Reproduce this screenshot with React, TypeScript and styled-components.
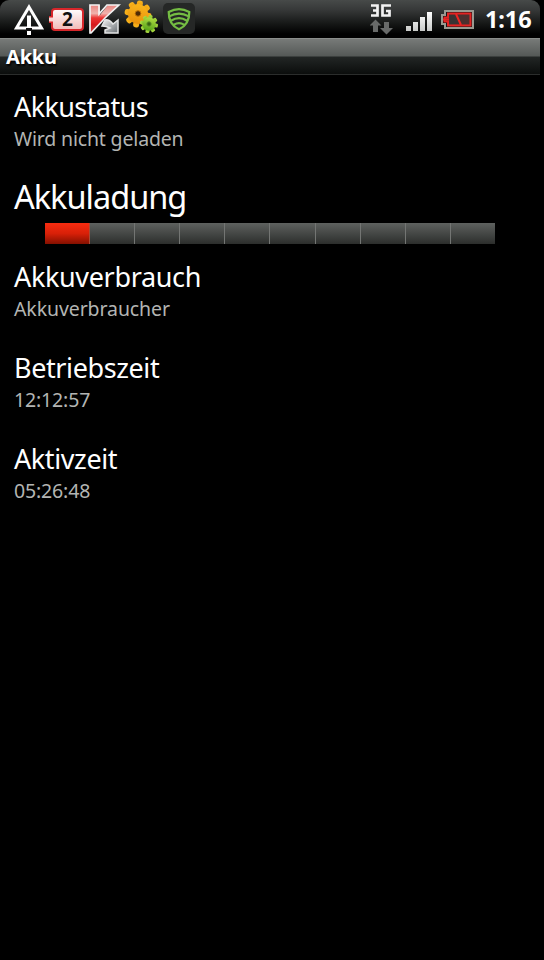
import React from 'react';
import styled, { createGlobalStyle } from 'styled-components';

const GlobalStyle = createGlobalStyle`
  html, body { margin: 0; background: #000; }
  body { overflow: hidden; font-family: "Noto Sans", "Open Sans", sans-serif; }
  svg { display: block; flex: none; }
`;

const Screen = styled.div`
  width: 540px;
  height: 960px;
  background: #000;
  color: #fff;
`;

const StatusBar = styled.header`
  display: flex;
  justify-content: space-between;
  box-sizing: border-box;
  height: 38px;
  padding: 0 8px 0 13px;
  border-radius: 9px 9px 0 0;
  background: linear-gradient(#474a49 0, #363838 10px, #171918 23px, #000 34px);
`;

const IconGroup = styled.div<{ $gap: number }>`
  display: flex;
  gap: ${(p) => p.$gap}px;
`;

const Clock = styled.span`
  width: 47px;
  margin-left: 3px;
  font-size: 23.5px;
  line-height: 39px;
  font-weight: 700;
  letter-spacing: -0.1px;
  white-space: nowrap;
`;

const TitleBar = styled.h1`
  box-sizing: border-box;
  height: 37px;
  margin: 0;
  padding-left: 6px;
  border-top: 1px solid #8a8d8b;
  border-bottom: 1px solid #2b2d2c;
  background: linear-gradient(#777a78 0, #555957 17px, #222625 18px, #0b0d0c 35px);
  font-size: 20px;
  line-height: 36px;
  font-weight: 700;
  letter-spacing: -0.2px;
  text-shadow: 1px 2px 2px #000;
`;

const Content = styled.main`
  padding: 14px 14px 0;
`;

const Row = styled.section`
  height: 91px;
`;

const ChargeRow = styled.section`
  height: 84px;
  margin-top: -5px;
`;

const Label = styled.h2<{ $size?: number; $spacing: number }>`
  margin: 0;
  font-size: ${(p) => p.$size ?? 27}px;
  line-height: ${(p) => (p.$size ? 44 : 36)}px;
  font-weight: 400;
  letter-spacing: ${(p) => p.$spacing}px;
  white-space: nowrap;
`;

const Detail = styled.p<{ $spacing: number }>`
  margin: 1px 0 0;
  color: #b3b5b3;
  font-size: 19.5px;
  line-height: 26px;
  letter-spacing: ${(p) => p.$spacing}px;
  white-space: nowrap;
`;

const Meter = styled.div`
  display: flex;
  width: 450px;
  height: 21px;
  margin: 4px 0 0 31px;
`;

const Segment = styled.div<{ $on: boolean }>`
  flex: 1;
  box-sizing: border-box;
  border-right: 1px solid ${(p) => (p.$on ? '#a94b36' : '#737573')};
  background: ${(p) => (p.$on ? 'linear-gradient(#f72c10, #d82008 50%, #841000)' : 'linear-gradient(#5e615f, #2c2e2c)')};
  &:last-child { border-right: 0; }
`;

const WarningIcon = () => (
  <svg width="33" height="38" viewBox="0 0 33 38">
    <path d="M16 7 L28.5 28 H3.5 Z" fill="none" stroke="#fff" strokeWidth="3" />
    <path d="M14 15.5h4v12h-4z" fill="#fff" />
    <path d="M13 28h6v3h-6z" fill="#111" />
    <path d="M14 31h4v4h-4z" fill="#fff" />
  </svg>
);

const BatteryCount = () => (
  <svg width="38" height="38" viewBox="0 0 38 38">
    <defs>
      <linearGradient id="pill" x2="0" y2="1"><stop stopColor="#fff" /><stop offset="1" stopColor="#f2b7b4" /></linearGradient>
    </defs>
    <path d="M7 9h25q3 0 3 3v15q0 3-3 3H7q-3 0-3-3v-5H2v-5h2v-5q0-3 3-3Z" fill="url(#pill)" stroke="#d7272b" strokeWidth="2" />
    <path d="M1 17.5h4v4H1z" fill="#f8d5d3" />
    <text x="19.5" y="26.2" textAnchor="middle" fontFamily="Noto Sans" fontWeight="700" fontSize="19" fill="#111">2</text>
  </svg>
);

const KasperskyIcon = () => (
  <svg width="33" height="38" viewBox="0 0 33 38">
    <defs>
      <linearGradient id="kred" x2="0" y2="1"><stop stopColor="#e98580" /><stop offset=".3" stopColor="#f0b3ad" /><stop offset=".46" stopColor="#ed3634" /><stop offset=".7" stopColor="#d6191d" /><stop offset="1" stopColor="#c94c49" /></linearGradient>
      <linearGradient id="kgrey" x2="1" y2="1"><stop stopColor="#f1f1f1" /><stop offset="1" stopColor="#686e72" /></linearGradient>
    </defs>
    <path d="M2 5h10v10l8-10h11L17 18 3 33H2Z" fill="url(#kred)" />
    <path d="M2 5h9v9l8-9h12L17 18 3 33H2Z" fill="none" stroke="#f3f3f3" strokeWidth="1.7" />
    <path d="M17 20q4-1 8 4l5-4v13H17v-3l5-2q-4-2-8-2Z" fill="url(#kgrey)" stroke="#e4e5e5" strokeWidth="1.5" />
  </svg>
);

const teeth = [0, 45, 90, 135, 180, 225, 270, 315];

const GearsIcon = () => (
  <svg width="37" height="38" viewBox="0 0 37 38">
    <defs>
      <linearGradient id="gold" x2="0" y2="1"><stop stopColor="#f9b51c" /><stop offset="1" stopColor="#e88f0b" /></linearGradient>
      <linearGradient id="lime" x2="0" y2="1"><stop stopColor="#b0dc42" /><stop offset="1" stopColor="#56a318" /></linearGradient>
    </defs>
    <g fill="url(#gold)" transform="translate(15 14) rotate(10)">
      {teeth.map((a) => <rect key={a} x="-3" y="-13.5" width="6" height="9" rx="2.3" transform={`rotate(${a})`} />)}
      <circle r="10" />
    </g>
    <circle cx="15" cy="13.5" r="2.8" fill="#4e2b06" stroke="#bd7106" />
    <g fill="url(#lime)" transform="translate(26 24) rotate(12)">
      {teeth.map((a) => <rect key={a} x="-2" y="-9" width="4" height="7" rx="1.2" transform={`rotate(${a})`} />)}
      <circle r="6.7" />
    </g>
    <circle cx="26" cy="24" r="2.2" fill="#386210" stroke="#609629" />
  </svg>
);

const ShieldIcon = () => (
  <svg width="34" height="38" viewBox="0 0 34 38">
    <rect x="1" y="3" width="32" height="31" rx="5" fill="#252726" />
    <g fill="none" stroke="#74bd43" strokeWidth="2.2" strokeLinecap="round">
      <path d="M17 9.2Q12 9.2 6.7 12 6.5 24.5 17 29.3 27.5 24.5 27.3 12 22 9.2 17 9.2Z" />
      <path d="M7.2 16.4Q17 10.8 26.8 16.4M9 20.7q8-5 16 0M12 24.7q5-3.2 10 0" />
    </g>
  </svg>
);

const NetworkIcon = () => (
  <svg width="25" height="38" viewBox="0 0 25 38">
    <path d="M1 5.5h6.5v10H1M3 10.5h5M21 5.5h-8.5v10h7v-4.5H16" fill="none" stroke="#f2f2f2" strokeWidth="2.7" />
    <path d="m5.5 19.5 6 6H8v6.5H3v-6.5H-.5ZM14 22h5v6h4l-6.5 6.5L10 28h4Z" fill="#686a69" />
  </svg>
);

const SignalIcon = () => (
  <svg width="27" height="38" viewBox="0 0 27 38">
    <defs><linearGradient id="signal" x2="0" y2="1"><stop stopColor="#fff" /><stop offset="1" stopColor="#c7c9c7" /></linearGradient></defs>
    <path d="M0 26h5v5H0zM7 22h5v9H7zM14 17h5v14h-5zM21 12h5v19h-5z" fill="url(#signal)" />
  </svg>
);

const BatteryIcon = () => (
  <svg width="35" height="38" viewBox="0 0 35 38">
    <path d="M5 11h28v17H5v-4H2v-9h3Z" fill="#181515" stroke="#999990" strokeWidth="2" />
    <path d="M8 13.5h22.5v12H8v-4H4.5v-4H8Z" fill="#4b302f" stroke="#e52322" strokeWidth="2" />
    <path d="M10 15h7l4 9H10Z" fill="#393333" />
    <path d="m16 14 5 11M3 19.5h6" stroke="#ec2422" strokeWidth="2" />
  </svg>
);

const details = [
  { label: 'Akkuverbrauch', detail: 'Akkuverbraucher', labelSpacing: -0.35, detailSpacing: -0.1 },
  { label: 'Betriebszeit', detail: '12:12:57', labelSpacing: -0.4, detailSpacing: -0.15 },
  { label: 'Aktivzeit', detail: '05:26:48', labelSpacing: -0.4, detailSpacing: -0.15 },
];

export default function App() {
  return (
    <Screen>
      <GlobalStyle />
      <StatusBar>
        <IconGroup $gap={2}>
          <WarningIcon />
          <BatteryCount />
          <KasperskyIcon />
          <GearsIcon />
          <ShieldIcon />
        </IconGroup>
        <IconGroup $gap={7}>
          <IconGroup $gap={11}><NetworkIcon /><SignalIcon /></IconGroup>
          <BatteryIcon />
          <Clock>1:16</Clock>
        </IconGroup>
      </StatusBar>
      <TitleBar>Akku</TitleBar>
      <Content>
        <Row>
          <Label $spacing={-0.6}>Akkustatus</Label>
          <Detail $spacing={-0.17}>Wird nicht geladen</Detail>
        </Row>
        <ChargeRow>
          <Label $size={32.5} $spacing={-1}>Akkuladung</Label>
          <Meter>
            {Array.from({ length: 10 }, (_, i) => <Segment key={i} $on={i === 0} />)}
          </Meter>
        </ChargeRow>
        {details.map((d) => (
          <Row key={d.label}>
            <Label $spacing={d.labelSpacing}>{d.label}</Label>
            <Detail $spacing={d.detailSpacing}>{d.detail}</Detail>
          </Row>
        ))}
      </Content>
    </Screen>
  );
}
